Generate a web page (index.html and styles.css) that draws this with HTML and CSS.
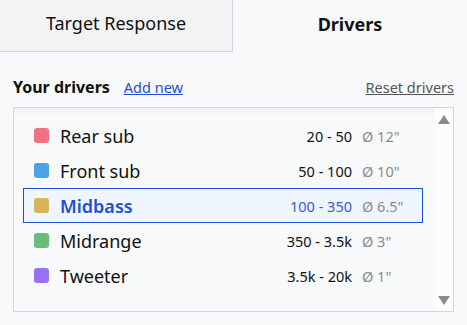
FILE: index.html
```html
<!DOCTYPE html>
<html lang="en">
<head>
  <meta charset="UTF-8" />
  <meta name="viewport" content="width=device-width, initial-scale=1.0" />
  <title>Drivers</title>
  <link rel="stylesheet" href="styles.css">
</head>
<body>
  <nav class="tabs">
    <button class="tab">Target Response</button>
    <button class="tab active">Drivers</button>
  </nav>

  <section class="panel">
    <div class="panel-head">
      <h2>Your drivers</h2>
      <a href="#" class="add-link">Add new</a>
      <a href="#" class="reset-link">Reset drivers</a>
    </div>

    <div class="driver-box">
      <ul class="driver-list">
        <li class="driver">
          <span class="swatch" style="background:#f0727f"></span>
          <span class="name">Rear sub</span>
          <span class="range">20 - 50</span>
          <span class="size">Ø 12"</span>
        </li>
        <li class="driver">
          <span class="swatch" style="background:#4ea2e8"></span>
          <span class="name">Front sub</span>
          <span class="range">50 - 100</span>
          <span class="size">Ø 10"</span>
        </li>
        <li class="driver selected">
          <span class="swatch" style="background:#d9b45c"></span>
          <span class="name">Midbass</span>
          <span class="range">100 - 350</span>
          <span class="size">Ø 6.5"</span>
        </li>
        <li class="driver">
          <span class="swatch" style="background:#68bd78"></span>
          <span class="name">Midrange</span>
          <span class="range">350 - 3.5k</span>
          <span class="size">Ø 3"</span>
        </li>
        <li class="driver">
          <span class="swatch" style="background:#9a70f3"></span>
          <span class="name">Tweeter</span>
          <span class="range">3.5k - 20k</span>
          <span class="size">Ø 1"</span>
        </li>
      </ul>
      <div class="scrollbar">
        <span class="arrow up"></span>
        <span class="arrow down"></span>
      </div>
    </div>
  </section>
</body>
</html>
```

FILE: styles.css
```css
body {
  font-family: "Noto Sans", "Open Sans", sans-serif;
  margin: 0;
  background-color: #f8f9fb;
  color: #111;
}

.tabs {
  display: flex;
  height: 52px;
}
.tab {
  font-family: inherit;
  font-size: 18px;
  color: #111;
  border: none;
  background: none;
  cursor: pointer;
}
.tab:first-child {
  width: 233px;
  background: #f2f3f5;
  border-right: 1px solid #d4d6db;
  border-bottom: 1px solid #d4d6db;
  padding-bottom: 6px;
}
.tab.active {
  flex: 1;
  font-weight: bold;
  padding-bottom: 6px;
}

.panel {
  padding: 24px 13px 0 13px;
}
.panel-head {
  display: flex;
  align-items: baseline;
  height: 31px;
}
.panel-head h2 {
  margin: 0;
  font-size: 16px;
  font-weight: bold;
  color: #111;
}
.add-link {
  margin-left: 14px;
  font-size: 14.5px;
  color: #1d4ed8;
}
.reset-link {
  margin-left: auto;
  font-size: 14.5px;
  color: #555;
}

.driver-box {
  display: flex;
  height: 203px;
  border: 1px solid #d4d6db;
  background: #f8f9fb;
  box-shadow: inset 0 6px 6px -4px rgba(0,0,0,0.06);
}
.driver-list {
  flex: 1;
  list-style: none;
  margin: 0;
  padding: 10px 9px 0 9px;
}
.driver {
  display: flex;
  align-items: center;
  height: 33px;
  padding: 0 4px 0 10px;
  border: 1px solid transparent;
}
.swatch {
  width: 15px;
  height: 15px;
  border-radius: 3px;
  margin-right: 11px;
}
.name {
  flex: 1;
  font-size: 18px;
}
.range {
  font-size: 14.5px;
}
.size {
  width: 56px;
  margin-left: 10px;
  font-size: 14.5px;
  color: #8a8a8a;
}
.driver.selected {
  background: #eff6ff;
  border-color: #1d4ed8;
}
.driver.selected .name {
  color: #1d4ed8;
  font-weight: 600;
}
.driver.selected .range {
  color: #3b5bdb;
}

.scrollbar {
  width: 19px;
  margin-left: 2px;
  background: #fcfcfd;
  display: flex;
  flex-direction: column;
  justify-content: space-between;
  align-items: center;
  padding: 7px 0 6px;
}
.arrow {
  width: 0;
  height: 0;
  border-left: 6px solid transparent;
  border-right: 6px solid transparent;
}
.arrow.up {
  border-bottom: 9px solid #8a8a8a;
}
.arrow.down {
  border-top: 9px solid #8a8a8a;
}
```
